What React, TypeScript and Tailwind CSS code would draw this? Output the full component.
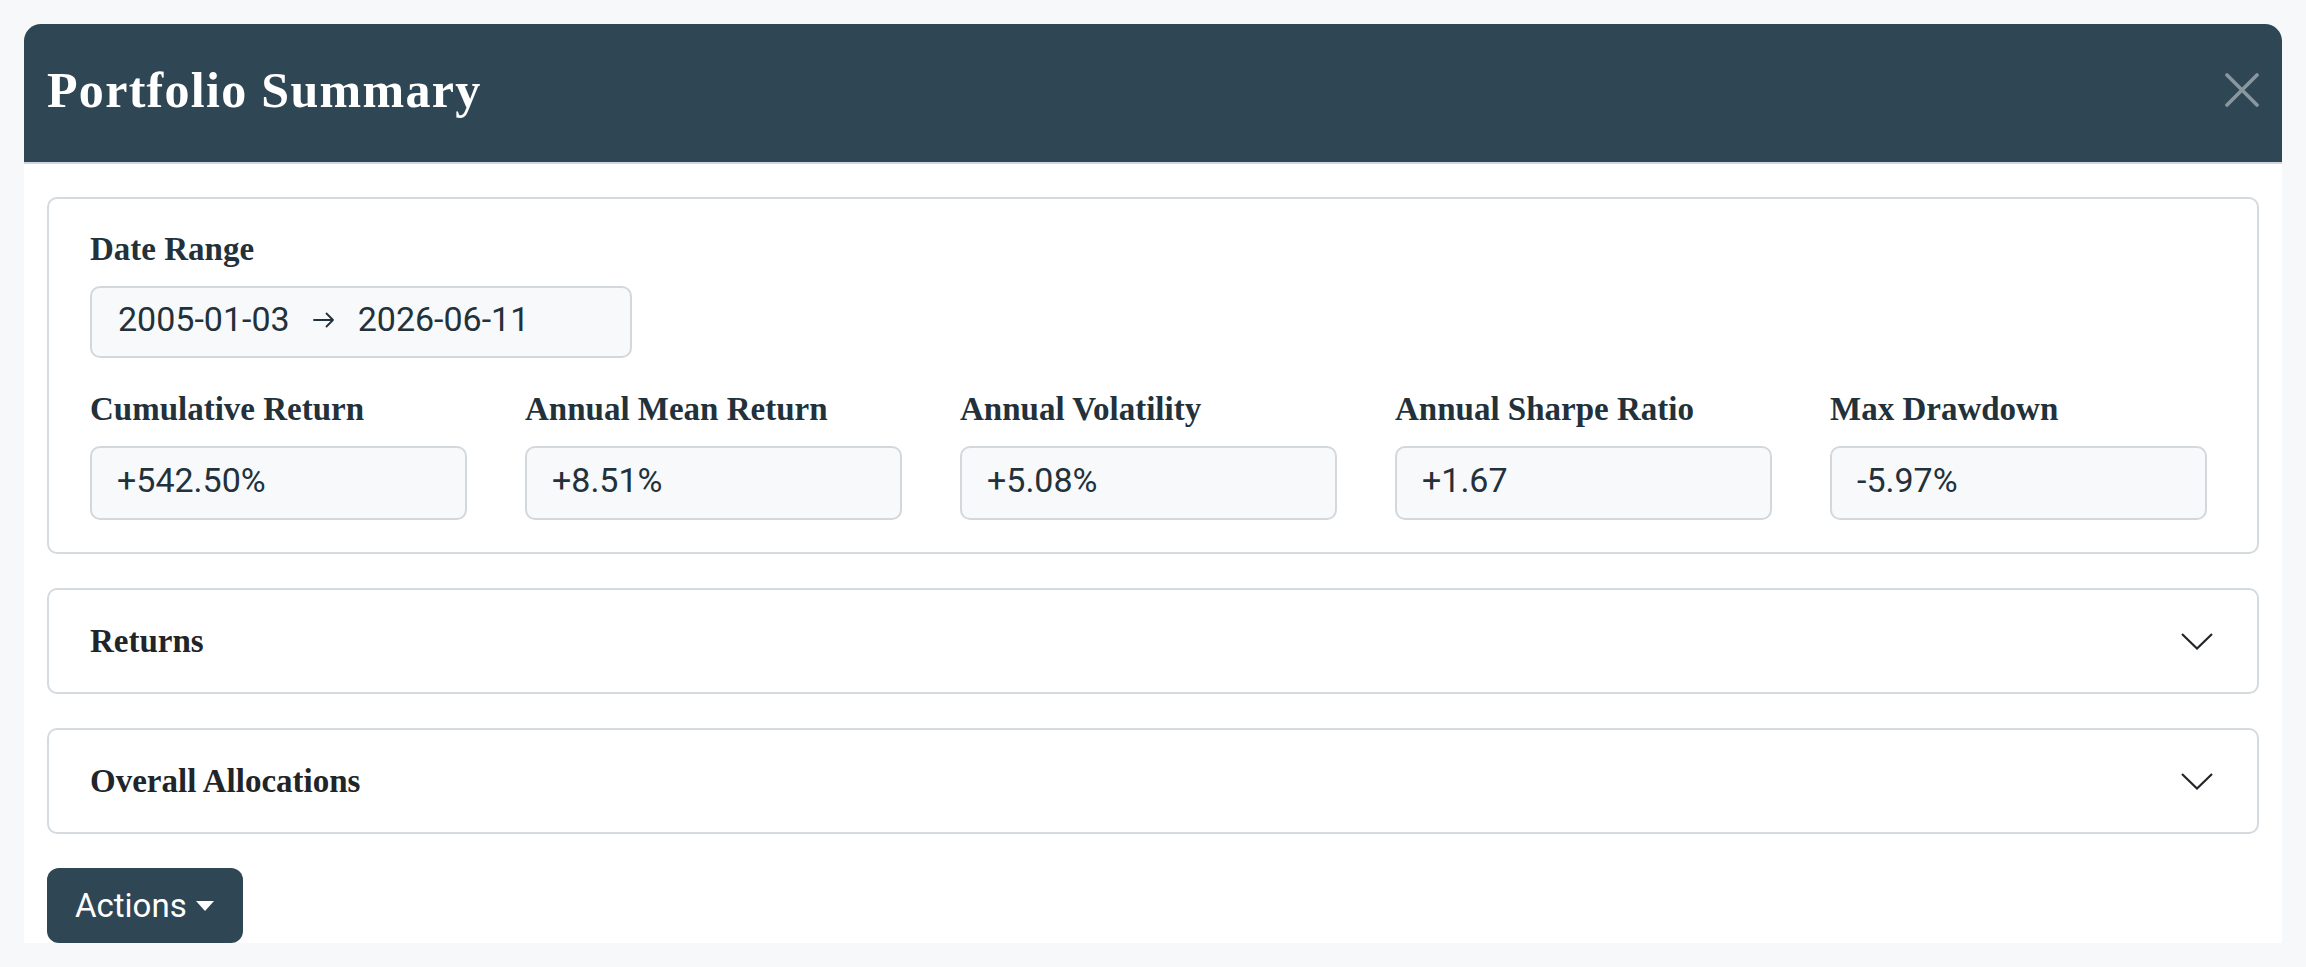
const serif = { fontFamily: '"Liberation Serif", "Times New Roman", serif' };

const stats = [
  { label: "Cumulative Return", value: "+542.50%" },
  { label: "Annual Mean Return", value: "+8.51%" },
  { label: "Annual Volatility", value: "+5.08%" },
  { label: "Annual Sharpe Ratio", value: "+1.67" },
  { label: "Max Drawdown", value: "-5.97%" },
];

function Label({ children }: { children: React.ReactNode }) {
  return (
    <div style={serif} className="text-[33px] font-bold leading-[40px] text-[#22313a]">
      {children}
    </div>
  );
}

function Section({ title }: { title: string }) {
  return (
    <div className="flex h-[106px] items-center justify-between rounded-[10px] border-2 border-[#d5dade] bg-white pl-[41px] pr-[44px]">
      <span style={serif} className="text-[33px] font-bold leading-[40px] text-[#212529]">
        {title}
      </span>
      <svg width="32" height="17" viewBox="0 0 32 17" fill="none" className="text-[#212529]">
        <path d="M1 1 L16 15.5 L31 1" stroke="currentColor" strokeWidth="2.2" />
      </svg>
    </div>
  );
}

export default function App() {
  return (
    <div
      className="min-h-screen bg-[#f6f8fa] p-[24px]"
      style={{ fontFamily: 'Roboto, "Liberation Sans", sans-serif' }}
    >
      <div className="overflow-hidden rounded-t-[17px] bg-white">
        <header className="flex h-[140px] items-center justify-between border-b-2 border-[#d0d7de] bg-[#2f4654] pl-[23px] pr-[23px] pb-[6px]">
          <h1 style={serif} className="text-[50px] font-bold leading-none tracking-[1.3px] text-white">
            Portfolio Summary
          </h1>
          <button className="text-[#8a979f]">
            <svg width="34" height="34" viewBox="0 0 34 34" fill="none">
              <path d="M2 2 L32 32 M32 2 L2 32" stroke="currentColor" strokeWidth="3.6" strokeLinecap="round" />
            </svg>
          </button>
        </header>

        <div className="flex flex-col gap-[34px] px-[23px] pt-[33px]">
          <div className="rounded-[10px] border-2 border-[#d5dade] pt-[30px] pb-[32px] pl-[41px] pr-[50px]">
            <Label>Date Range</Label>
            <div className="mt-[17px] flex h-[72px] w-[542px] items-center gap-[23px] rounded-[10px] border-2 border-[#d3d8dd] bg-[#f8f9fa] pb-[6px] pl-[26px] text-[34px] leading-none text-[#22313a]">
              <span>2005-01-03</span>
              <svg width="22" height="16" viewBox="0 0 22 16" fill="none" className="mt-[2px]">
                <path d="M1 8 H20 M13.5 1.5 L20 8 L13.5 14.5" stroke="currentColor" strokeWidth="1.8" strokeLinecap="round" strokeLinejoin="round" />
              </svg>
              <span>2026-06-11</span>
            </div>

            <div className="mt-[31px] grid grid-cols-5 gap-x-[58px]">
              {stats.map((s) => (
                <div key={s.label}>
                  <Label>{s.label}</Label>
                  <div className="mt-[17px] flex h-[74px] items-center rounded-[10px] border-2 border-[#d3d8dd] bg-[#f8f9fa] pb-[6px] pl-[25px] text-[34px] leading-none text-[#22313a]">
                    {s.value}
                  </div>
                </div>
              ))}
            </div>
          </div>

          <Section title="Returns" />
          <Section title="Overall Allocations" />

          <div>
            <button className="flex h-[75px] w-[196px] items-center gap-[9px] rounded-[12px] bg-[#2f4654] pl-[28px] text-[33px] leading-none text-white">
              Actions
              <span className="h-0 w-0 border-x-[9px] border-t-[10px] border-x-transparent border-t-white" />
            </button>
          </div>
        </div>
      </div>
    </div>
  );
}
